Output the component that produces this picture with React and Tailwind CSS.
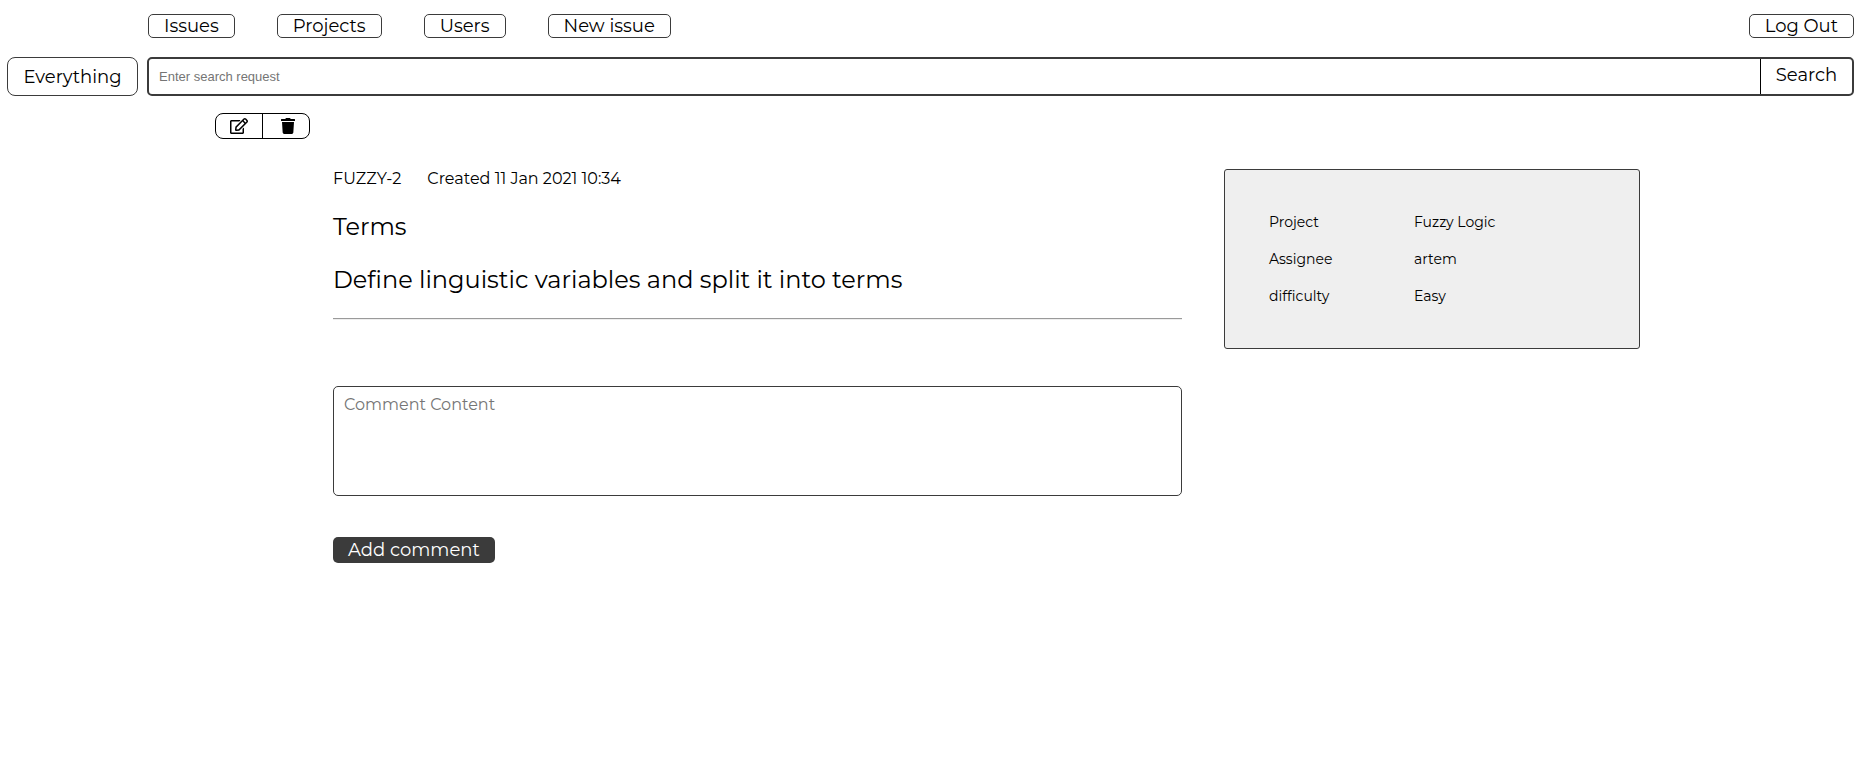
import { FaRegEdit, FaTrash } from "react-icons/fa";

const links = ["Issues", "Projects", "Users", "New issue"];

const details = [
  ["Project", "Fuzzy Logic"],
  ["Assignee", "artem"],
  ["difficulty", "Easy"],
];

const navButton =
  "flex h-6 items-center justify-center whitespace-nowrap rounded-[5px] border border-[#3b3b3b] px-[15px] text-lg leading-6";

function Header() {
  return (
    <header className="flex justify-between pt-3.5 pr-[15px] pl-[148px]">
      <nav className="flex gap-[42px]">
        {links.map((label) => (
          <a key={label} href="#" className={navButton}>
            {label}
          </a>
        ))}
      </nav>
      <button type="button" className={navButton}>
        Log Out
      </button>
    </header>
  );
}

function SearchBar() {
  return (
    <form
      className="mt-[19px] flex gap-[9px] pr-[15px] pl-[7px]"
      onSubmit={(event) => event.preventDefault()}
    >
      <button
        type="button"
        className="h-[39px] w-[131px] shrink-0 rounded-lg border border-[#3b3b3b] text-lg leading-6"
      >
        Everything
      </button>
      <div className="flex h-[39px] min-w-0 flex-1 rounded-[5px] border-2 border-[#3b3b3b]">
        <input
          type="text"
          aria-label="Search request"
          placeholder="Enter search request"
          className="min-w-0 flex-1 px-2.5 font-['Liberation_Sans',sans-serif] text-[13px] outline-none placeholder:text-[#757575]"
        />
        <button
          type="submit"
          className="w-[92px] shrink-0 border-l border-black pb-1 text-lg leading-6"
        >
          Search
        </button>
      </div>
    </form>
  );
}

function IssueActions() {
  return (
    <div className="mt-[17px] ml-[215px] flex h-[26px] w-[95px] overflow-hidden rounded-lg border border-black">
      <button
        type="button"
        aria-label="Edit issue"
        className="flex w-[46px] items-center justify-center"
      >
        <FaRegEdit className="size-[18px]" />
      </button>
      <button
        type="button"
        aria-label="Delete issue"
        className="flex flex-1 items-center justify-center border-l border-black pl-1"
      >
        <FaTrash className="size-4" />
      </button>
    </div>
  );
}

function Issue() {
  return (
    <article className="min-w-0 flex-1">
      <div className="flex gap-[26px] text-base leading-5">
        <span>FUZZY-2</span>
        <span>Created 11 Jan 2021 10:34</span>
      </div>
      <h1 className="mt-[23px] text-2xl leading-[29px]">Terms</h1>
      <p className="mt-6 text-2xl leading-[29px]">
        Define linguistic variables and split it into terms
      </p>
      <hr className="mt-6 border-t border-b border-t-[#9a9a9a] border-b-[#eeeeee]" />
      <form onSubmit={(event) => event.preventDefault()}>
        <textarea
          aria-label="Comment Content"
          placeholder="Comment Content"
          className="mt-[66px] block h-[110px] w-full resize-none rounded-[5px] border border-[#3b3b3b] px-2.5 py-2 text-base leading-5 outline-none placeholder:text-[#757575]"
        />
        <button
          type="submit"
          className="mt-[41px] block h-[26px] rounded-[5px] bg-[#3b3b3b] px-[15px] text-lg leading-6 text-white"
        >
          Add comment
        </button>
      </form>
    </article>
  );
}

function Details() {
  return (
    <aside className="w-[416px] shrink-0 self-start rounded-[3px] border border-[#3b3b3b] bg-[#efefef] px-11 py-[42px]">
      <dl className="flex flex-col gap-[17px] text-sm">
        {details.map(([name, value]) => (
          <div key={name} className="flex">
            <dt className="w-[145px]">{name}</dt>
            <dd>{value}</dd>
          </div>
        ))}
      </dl>
    </aside>
  );
}

export default function App() {
  return (
    <div className="bg-white font-['Montserrat',sans-serif] text-black">
      <Header />
      <SearchBar />
      <IssueActions />
      <main className="mt-[30px] flex gap-[42px] pr-[229px] pl-[333px]">
        <Issue />
        <Details />
      </main>
    </div>
  );
}
